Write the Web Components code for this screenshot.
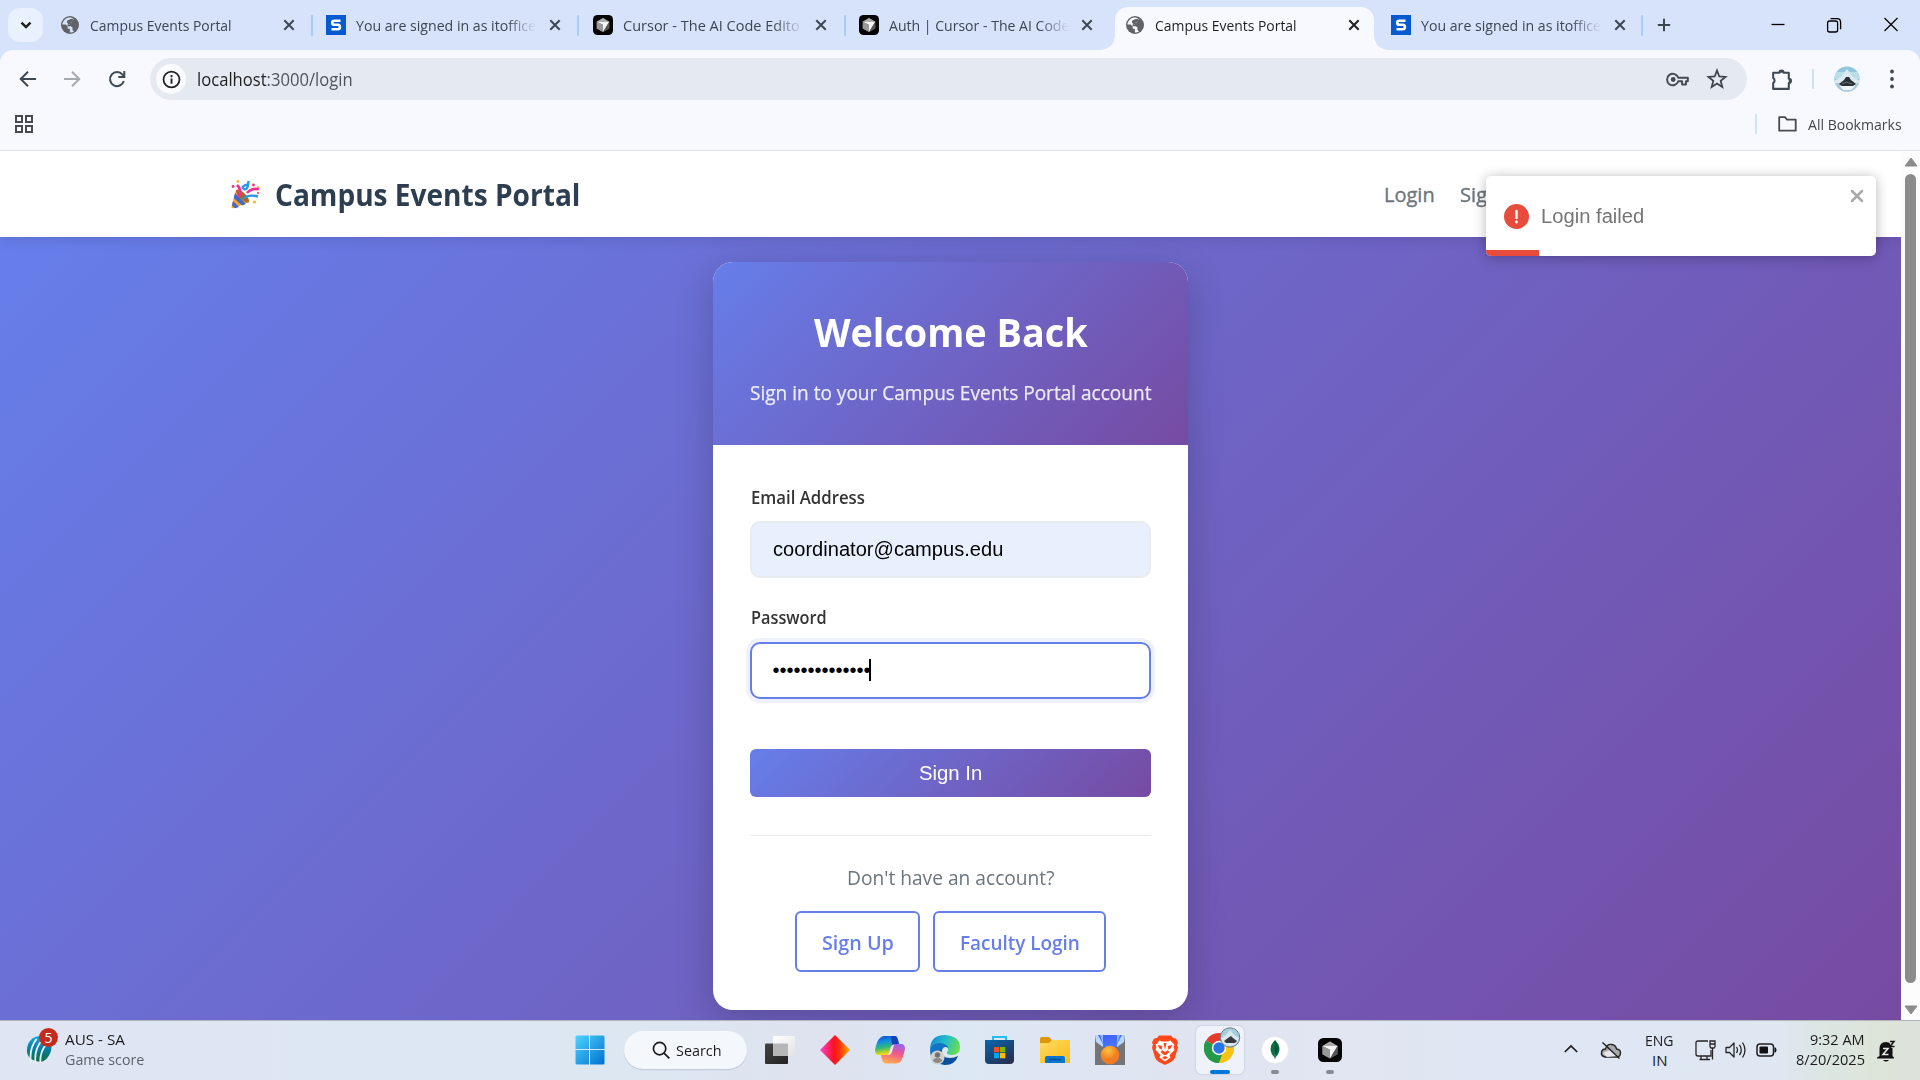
<!DOCTYPE html>
<html lang="en">
<head>
<meta charset="utf-8">
<title>Campus Events Portal</title>
<style>
html,body{margin:0;padding:0;height:100%;overflow:hidden}
body{font-family:"Open Sans","Noto Sans",sans-serif;color:#1f1f1f}
</style>
</head>
<body>
<desktop-screen></desktop-screen>
<script>
const ICONS = {
chevron:[20,20,'<path d="M5.5 7.6 10 12.1l4.5-4.5" fill="none" stroke="#1f1f1f" stroke-width="2.5"/>'],
globe:[20,20,'<circle cx="10" cy="10" r="9" fill="#5f6368"/><path d="M9 2.6c-3.5.6-6.300 3.500-6.600 6.900h3.300l2 2v2.200h2.200v3.700c1.500.1 3-.3 4.100-.9l-1.500-1.500v-2.400l-1.700-1.300H7.600V9.300h2.500V7.300h2V5.200L14 4.400C12.500 3 10.700 2.500 9 2.600z" fill="var(--tab,#d7e3fa)"/><path d="M10.600 4h2.900l-1.100 1.500v1.600h-2V9H8.200L7 7.500V5.800z" fill="#5f6368"/>'],
sicon:[20,20,'<path fill="#0759cf" d="M0 0h20v20H0z"/><path d="M14.500 5.700H8.300Q6.200 5.700 6.200 7.700T8.300 9.800h3.500q2.100 0 2.100 2.200t-2.100 2.200H5.500" fill="none" stroke="#fff" stroke-width="2.600"/>'],
cursor:[24,24,'<rect width="24" height="24" rx="5.500" fill="#050505"/><path d="M12 3.500 19.500 8v8.300L12 20.500l-7.500-4.200V8z" fill="#777"/><path d="M4.500 8 12 3.500 19.500 8z" fill="#aaa"/><path d="M4.500 8H19.500L12 20.500V11.800z" fill="#f5f5f5"/><path d="M4.500 8 12 11.800v8.700l-7.500-4.200z" fill="#999"/><path d="M19.500 8v8.300L12 20.500z" fill="#555"/>'],
close:[20,20,'<path d="m5.300 5.300 9.400 9.400m0-9.400-9.400 9.400" stroke="currentColor" stroke-width="2" fill="none"/>'],
plus:[20,20,'<path d="M10 3.800v12.400M3.800 10h12.400" stroke="#3c4655" stroke-width="2"/>'],
min:[20,20,'<path d="M3.500 9.500h13" stroke="#000" stroke-width="1.300"/>'],
restore:[20,20,'<rect x="3.600" y="6" width="10" height="11" rx="2" fill="none" stroke="#000" stroke-width="1.300"/><path d="M6.500 3.600h6.500q3.600 0 3.600 3.600v7" fill="none" stroke="#000" stroke-width="1.300"/>'],
wclose:[20,20,'<path d="m3.500 3 13 13m0-13-13 13" stroke="#000" stroke-width="1.200"/>'],
back:[24,24,'<path d="M20 12H5m7-7.300L4.700 12l7.300 7.300" fill="none" stroke="#3f4956" stroke-width="2"/>'],
fwd:[24,24,'<path d="M4 12h15m-7-7.300 7.300 7.300-7.300 7.300" fill="none" stroke="#a5a9b0" stroke-width="2"/>'],
reload:[24,24,'<path d="M18.800 14a7 7 0 1 1-1.300-6.300l1.700 1.700" fill="none" stroke="#3f4956" stroke-width="2"/><path d="M19.300 4v6h-6" fill="none" stroke="#3f4956" stroke-width="2"/>'],
info:[20,20,'<circle cx="10" cy="10" r="7.600" fill="none" stroke="#222" stroke-width="1.700"/><path d="M10 9v5M10 5.800v2" stroke="#222" stroke-width="1.800"/>'],
key:[24,24,'<path d="M12.800 10.200h10v3.700h-2v3.400h-4v-3.400h-4A6 6 0 1 1 12.800 10.200z" fill="none" stroke="#474b50" stroke-width="2" stroke-linejoin="round"/><circle cx="7.500" cy="12" r="2.500" fill="#474b50"/>'],
star:[22,22,'<path d="m11 2.500 2.300 6 6.200.4-4.800 4 1.600 6.100-5.300-3.400L5.700 19l1.600-6.100-4.800-4 6.200-.4z" fill="none" stroke="#3f444a" stroke-width="1.800"/>'],
puzzle:[24,24,'<path d="M4 5.500h6a2 2 0 1 1 4 0h5v5.700a2.100 2.100 0 1 1 0 4.200V21H4v-5.500a3 3 0 0 0 0-5z" fill="none" stroke="#3f4956" stroke-width="2" stroke-linejoin="round"/><path d="M10 5.500a2 2 0 1 1 4 0zM19 11.200a2.100 2.100 0 1 1 0 4.200z" fill="#3f4956"/>'],
avatar:[26,26,'<clipPath id="a"><circle cx="13" cy="13" r="12.600"/></clipPath><g clip-path="url(#a)"><path fill="#8fc7dd" d="M0 0h26v26H0z"/><path fill="#b9dde9" d="M0 6h26v7H0z"/><path fill="#dcebf1" d="m13 3 6 8 7 4v11H0V15l7-4z"/><path fill="#a9c9da" d="M0 17h6l4 6h8l5-6h3v9H0z"/><path fill="#eef5f8" d="m6 20 7-2 8 2-4 4H9z"/><path d="m5 18 5-4 2-3h3l2 3 5 4-3 2H8z" fill="#2b3035"/><path d="m8 18 4-2 6 2" stroke="#63717b" fill="none"/></g>'],
dots:[24,24,'<circle cx="12" cy="4.500" r="1.900" fill="#3f4956"/><circle cx="12" cy="12" r="1.900" fill="#3f4956"/><circle cx="12" cy="19.500" r="1.900" fill="#3f4956"/>'],
apps:[20,20,'<path d="M2 2h6v6H2zM12 2h6v6h-6zM2 12h6v6H2zM12 12h6v6h-6z" fill="none" stroke="#474b50" stroke-width="2"/>'],
folder:[22,20,'<path d="M2.300 3.200h6l2.300 2.600h9v11.700H2.300z" fill="none" stroke="#474b50" stroke-width="1.900" stroke-linejoin="round"/>'],
party:[30,30,'<path d="M6 11 19 23 4 29Q1 30 1.500 27z" fill="#f5a623"/><path d="m5 14 11 11-4 1.500L3.700 19zM3 22l6 6-4 1.300-3-3z" fill="#4169c9"/><ellipse cx="12.600" cy="17" rx="3.200" ry="8.700" transform="rotate(-45 12.600 17)" fill="#a96b21"/><path d="M7 6q5 4 1.800 12M17 14q4-5 12-4" fill="none" stroke="#f72d93" stroke-width="2.600"/><path d="M18.500 2q-.5 10-4.500 8t3-4.500M13 20q5-5 15-2.500" fill="none" stroke="#2997e8" stroke-width="2.400"/><g fill="#f72d93"><circle cx="3" cy="7.500" r="1.400"/><circle cx="23.500" cy="6" r="1.400"/><circle cx="28" cy="14" r="1.100"/></g><g fill="#f7b733"><circle cx="8" cy="2.500" r="1.400"/><circle cx="24.500" cy="23" r="1.600"/><path d="M27 7h2v2h-2z"/></g>'],
error:[25,25,'<circle cx="12.500" cy="12.500" r="12.500" fill="#e74c3c"/><path d="M12.500 7v7" stroke="#fff" stroke-width="2.400" stroke-linecap="round"/><circle cx="12.500" cy="18" r="1.400" fill="#fff"/>'],
tclose:[14,14,'<path d="m2 2 10 10M12 2 2 12" stroke="#a9a9a9" stroke-width="2.500" stroke-linecap="round"/>'],
up:[14,10,'<path d="M7 1 13 9H1z" fill="#8b8b8b" stroke="#8b8b8b" stroke-linejoin="round"/>'],
down:[14,10,'<path d="M7 9 1 1h12z" fill="#8b8b8b" stroke="#8b8b8b" stroke-linejoin="round"/>'],
cricket:[28,30,'<defs><linearGradient id="a" x2="0" y2="1"><stop stop-color="#18a7dd"/><stop offset=".5" stop-color="#087da0"/><stop offset="1" stop-color="#07713c"/></linearGradient></defs><path d="M1 17C1 8 7 2 15 2c9 0 13 7 11 15-2 7-6 11-11 12l-5-1-5-2Q1 22 1 17z" fill="url(#a)"/><path d="M5 30Q3 15 11 5M10 31Q8 17 16 7M15 31Q14 20 20 12" fill="none" stroke="#e8f0f7" stroke-width="1.900"/>'],
windows:[30,30,'<defs><linearGradient id="a" x2="1" y2="1"><stop stop-color="#4fd3ff"/><stop offset="1" stop-color="#0070cf"/></linearGradient></defs><path d="M2 .5h12V14H.5V2Q.5.500 2 .5zM15 .5h13q1.500 0 1.500 1.500v12H15zM.5 15H14v14.500H2Q.5 29.500.5 28zM15 15h14.500v13q0 1.500-1.500 1.500H15z" fill="url(#a)"/>'],
search:[20,20,'<circle cx="8" cy="8" r="6.500" fill="none" stroke="#1b1b1b" stroke-width="1.800"/><path d="m12.700 12.700 5.500 5.500" stroke="#1b1b1b" stroke-width="1.900"/>'],
taskview:[30,30,'<defs><linearGradient id="a" x2="1" y2="1"><stop stop-color="#444"/><stop offset="1" stop-color="#222"/></linearGradient><linearGradient id="b" y2="1"><stop stop-color="#fff"/><stop offset="1" stop-color="#e3e3e5"/></linearGradient></defs><rect y="8.500" width="23" height="20.500" rx="1" fill="url(#a)"/><rect x="8" y="1" width="22" height="20" rx="1" fill="url(#b)"/><path d="M8 8.500h15V21H8z" fill="#b7b7b7"/>'],
diamond:[30,30,'<defs><linearGradient id="a"><stop stop-color="#f944cf"/><stop offset=".45" stop-color="#ff1025"/><stop offset=".65" stop-color="#fa300c"/><stop offset="1" stop-color="#ffb400"/></linearGradient></defs><path d="m15 0 15 15-15 15L0 15z" fill="url(#a)"/>'],
copilot:[30,30,'<defs><linearGradient id="a" x2=".2" y2="1"><stop stop-color="#1646c7"/><stop offset=".35" stop-color="#118edf"/><stop offset=".65" stop-color="#34b879"/><stop offset="1" stop-color="#f4dd05"/></linearGradient><linearGradient id="b" x1=".7" y1="0" x2=".4" y2="1"><stop stop-color="#9763f0"/><stop offset=".45" stop-color="#ee578c"/><stop offset="1" stop-color="#ffad50"/></linearGradient></defs><path d="M9 1h11q2 0 3 4l1 4h-4q-3 0-4 4l-1.500 4q-1 3-4.500 3H4q-4 0-4-5Q2 5 5 3 7 1 9 1z" fill="url(#a)"/><path d="M16 1h4q2 0 3 4l1 4h-4l-3 1z" fill="#1740b9"/><path d="M20 9h6q4 0 4 5-2 9-4 12-1.500 2.500-5 2.500H11q-3 0-4-4l-1-4.500h4q3.500 0 4.500-3l1.500-5q1-3 4-3z" fill="url(#b)"/><path d="M18 10q-2 0-3 5l-1.500 4q-1 1-2 1h2.500q2 0 3-3l2-7z" fill="#e7e8f4"/>'],
edge:[30,30,'<defs><linearGradient id="a" x1="0" y1=".3" x2="1" y2=".6"><stop stop-color="#1589d6"/><stop offset=".45" stop-color="#22bccb"/><stop offset="1" stop-color="#6be04a"/></linearGradient></defs><path d="M0 15Q0 0 15 0q15 1 15 12 0 8-8 8-6 0-5-3 2-1.500 1-3.500-2-4-8-4T0 15z" fill="url(#a)"/><path d="M0 15Q2 8 10 8q8 1 8.500 6-.5-2-3-2-3 0-4 5 0 6 6 9l-2 4Q0 29 0 15z" fill="#1273c4"/><path d="M11.500 14q-.5 9 8.500 9 4 0 8-2-3 9-13 9-8-2-8-9 1-5 4.500-7z" fill="#0b4f9e"/><circle cx="7.500" cy="22.500" r="7" fill="#cfcfcf"/><circle cx="7.500" cy="20" r="2.700" fill="#74716e"/><path d="M3 26q0-3 4.500-3t4.500 3q-2 2-4.500 2T3 26z" fill="#8c8884"/>'],
store:[30,30,'<defs><linearGradient id="a" x2=".7" y2="1"><stop stop-color="#0767ae"/><stop offset="1" stop-color="#263052"/></linearGradient></defs><path d="M8 6V2h13v4" fill="none" stroke="#25bdf5" stroke-width="2"/><path d="M0 5h29v20q0 4-4 4H4q-4 0-4-4z" fill="url(#a)"/><path d="M9 12h5.300v5.300H9z" fill="#f25022"/><path d="M15 12h5.300v5.300H15z" fill="#7fba00"/><path d="M9 18h5.300v5.300H9z" fill="#00a4ef"/><path d="M15 18h5.300v5.300H15z" fill="#ffb900"/>'],
explorer:[30,30,'<defs><linearGradient id="a" x2="1" y2="1"><stop stop-color="#ffda65"/><stop offset="1" stop-color="#f9bc16"/></linearGradient></defs><path d="M0 4q0-2 2-2h7l3 3v5H0z" fill="#dc9704"/><path d="M0 8h9l3-3h17q1 0 1 1v22H0z" fill="url(#a)"/><path d="M5 28v-5q0-2 2-2h16q2 0 2 2v5z" fill="#0876ce"/><path d="M9 24.500h12" stroke="#075296" stroke-width="1.500"/>'],
medal:[30,30,'<defs><linearGradient id="a" y2="1"><stop stop-color="#3d5cff"/><stop offset="1" stop-color="#4c7ff6"/></linearGradient><radialGradient id="b" cx=".4" cy=".25"><stop stop-color="#ffc33c"/><stop offset="1" stop-color="#f37c22"/></radialGradient></defs><path d="M0 0h30v30H0z" fill="#757575"/><path d="m1 0 7 12h14l7-12z" fill="url(#a)"/><path d="M0 0h3l5 9v3L1 7zM30 0h-3l-5 9v3l7-5z" fill="#b8d6ff"/><path d="m5 0 3 9V0zM25 0l-3 9V0z" fill="#8bb5ff"/><circle cx="15" cy="20" r="9.300" fill="url(#b)"/>'],
brave:[30,30,'<path d="M9 .5h12l2 2.500 3 .5 2 4-1 2 1 3-3 10q-1 3-4 4.500L15 30l-6-3q-3-1.500-4-4.500L2 12.500l1-3-1-2 2-4L7 3z" fill="#ff4719"/><path d="m5.500 10 4-4.500L12 6.500h6l2.500-1 4 4.500-1 2 1 3-5 5 1 2.500-5.500 4-5.500-4 1-2.500-5-5 1-3z" fill="#fff"/><path d="m7.500 10 5 1-1 4 3.500 2 3.500-2-1-4 5-1-2 3.500-3 1.500 2 2-3.500 3h-2l-3.500-3 2-2-3-1.500z" fill="#ff4719"/><path d="m12 22.500 3-1.500 3 1.500-3 2zM13.500 8h3L15 15z" fill="#ff4719"/>'],
chrome:[40,40,'<g transform="translate(0 6)"><path d="M15 15 2 7.500A15 15 0 0 1 28 7.500z" fill="#e33b2e"/><path d="M15 15 28 7.500A15 15 0 0 1 15 30z" fill="#fbc115"/><path d="M15 15v15A15 15 0 0 1 2 7.500z" fill="#249a49"/><path d="M15 8h13.300a15 15 0 0 1-13.300 22l6.100-11.500z" fill="#fbc115"/><path d="M2 7.500 9 18.500l9 3L15 30A15 15 0 0 1 2 7.500z" fill="#249a49"/><circle cx="15" cy="15" r="7.200" fill="#fff"/><circle cx="15" cy="15" r="5.700" fill="#2874e8"/></g><circle cx="26" cy="10.500" r="9.700" fill="#a5cfdf" stroke="#727b85"/><path d="m26 3 4 5 5 3q-2 8-9 8-7 0-9-8l5-3z" fill="#dbe8ee"/><path d="m20 14 4-3 3-2 2 2 4 3-2 2h-9z" fill="#343a40"/>'],
mongo:[28,28,'<circle cx="14" cy="14" r="13.500" fill="#fff" stroke="#e2e4e8" stroke-width=".7"/><path d="M14 4q9 9 0 18Q5 13 14 4z" fill="#0b7042"/><path d="M14 4q5 9 0 18z" fill="#00533d"/><path d="M14 18v5" stroke="#668c79"/>'],
tup:[16,16,'<path d="m1.800 11 6.200-6 6.200 6" fill="none" stroke="#1b1b1b" stroke-width="1.700"/>'],
cloud:[22,20,'<path d="M5 17Q1 16 1.500 12.500 2 9 5.500 9 7 3.500 12 4.500q4 1 4.500 4.500 4 .5 4 4T17 17z" fill="#aaa" stroke="#262626" stroke-width="1.400"/><path d="m3 13 7-3 8 6-11 1z" fill="#e8e8e8"/><path d="m2.500 2.500 17 16" stroke="#222" stroke-width="1.500"/>'],
monitor:[22,22,'<path d="M13 2H3Q1 2 1 4v11q0 2 2 2h13V11M6 17v3m6-3v3M4.500 20.500H15" fill="none" stroke="#252525" stroke-width="1.300"/><path d="M15 2h5v5.500l-1 1.500h-3l-1-1.500zM15 5h5M17.500 9v11.500" fill="none" stroke="#252525" stroke-width="1.300"/>'],
speaker:[22,20,'<path d="M1 7.500h3.500L9 3v14l-4.500-4.500H1z" fill="none" stroke="#252525" stroke-width="1.300" stroke-linejoin="round"/><path d="M11.500 7q2 3 0 6M14.500 4.800q3.500 5.200 0 10.400M17.500 2.500q5 7.500 0 15" fill="none" stroke="#252525" stroke-width="1.300"/>'],
battery:[22,16,'<rect x="1" y="2" width="16.500" height="12" rx="3" fill="none" stroke="#202020" stroke-width="1.500"/><rect x="3.500" y="4.500" width="8.500" height="7" rx="1" fill="#111"/><path d="M18.500 5.500h1q2 2.500 0 5h-1z" fill="#111"/>'],
bell:[20,22,'<path d="M3.500 16V9q0-7 6.500-7 6 0 6.500 6v8l1.500 1.500v1H1v-1z" fill="#111"/><path d="M7 20h6q-3 3-6 0z" fill="#111"/><path d="M7 8.500h5l-5 6h5.500" fill="none" stroke="#e1e7e1" stroke-width="1.600"/><path d="M12.500 0H20v8h-4.500z" fill="#dde3dc"/><path d="M14 1.500h4L14 6.500h4.500" fill="none" stroke="#111" stroke-width="1.500"/>']
};
class Base extends HTMLElement{
  constructor(){super();this.attachShadow({mode:'open'});}
  draw(html){this.shadowRoot.innerHTML='<style>*{box-sizing:border-box}</style>'+html;}
}
customElements.define('ui-icon',class extends Base{
  connectedCallback(){
    const [w,h,body]=ICONS[this.getAttribute('name')];
    const W=this.getAttribute('w')||w,H=Math.round(W*h/w*100)/100;
    this.draw(`<style>:host{display:block;flex:none;width:${W}px;height:${H}px}svg{display:block}</style><svg width="${W}" height="${H}" viewBox="0 0 ${w} ${h}">${body}</svg>`);
  }
});
/* One line of text, condensed or widened to a given advance width. */
customElements.define('fit-text',class extends Base{
  connectedCallback(){
    const w=+this.getAttribute('w');
    this.draw(`<style>:host{display:block;flex:none;width:${w}px;white-space:pre}span{display:inline-block;transform-origin:0 50%}</style><span><slot></slot></span>`);
    const s=this.shadowRoot.querySelector('span');
    s.style.transform=`scaleX(${w/s.offsetWidth})`;
  }
});
customElements.define('browser-tab',class extends Base{
  connectedCallback(){
    const on=this.hasAttribute('active'),next=this.hasAttribute('nosep');
    this.draw(`<style>
    :host{display:flex;flex:none;width:266.25px;height:50px;padding:7px 0 0}
    .t{--tab:${on?'#f8f9fe':'#d7e3fa'};position:relative;display:flex;align-items:center;width:259px;height:43px;padding:0 10px 7px;border-radius:13px 13px 0 0;color:${on?'#1f1f1f':'#3c4655'};background:${on?'#f8f9fe':'none'}}
    .t.on::before,.t.on::after{content:"";position:absolute;bottom:0;width:14px;height:14px}
    .t.on::before{left:-14px;background:radial-gradient(circle at 0 0,transparent 13.500px,#f8f9fe 14px)}
    .t.on::after{right:-14px;background:radial-gradient(circle at 100% 0,transparent 13.500px,#f8f9fe 14px)}
    .l{width:180px;margin:0 9px 0 10px;overflow:hidden;font-size:15px;line-height:24px;${this.hasAttribute('fade')?'-webkit-mask-image:linear-gradient(90deg,#000 150px,transparent 180px)':''}}
    i{width:2px;height:21px;margin:8px 0 0 2px;border-radius:1px;background:${on||next?'none':'#a8cbfb'}}
    </style><div class="t ${on?'on':''}"><ui-icon name="${this.getAttribute('icon')}" w="20"></ui-icon><div class="l"><fit-text w="${this.getAttribute('w')}"><slot></slot></fit-text></div><ui-icon name="close" w="20" style="margin-left:-.5px"></ui-icon></div><i></i>`);
  }
});
customElements.define('browser-chrome',class extends Base{
  connectedCallback(){this.draw(`<style>
  :host{display:block;height:151px;background:#d7e3fa;color:#1f1f1f}
  .strip{display:flex;height:50px}
  .menu{display:flex;align-items:center;justify-content:center;width:35px;height:34px;margin:8px 7px 0 8px;border-radius:12px;background:#e9f1fe}
  .sep{width:2px;height:21px;margin:15px 11px 0 -6.500px;background:#a8cbfb;border-radius:1px}
  .plus{margin-top:15px}.win{display:flex;gap:37px;margin:15px 19px 0 auto}
  .bars{height:101px;background:#f8f9fe;border-radius:13px 13px 0 0;border-bottom:1px solid #dfe2ec}
  .nav{display:flex;align-items:center;height:58px;padding:0 15px 0 16px}
  .omni{display:flex;align-items:center;width:1597px;height:42px;margin-left:21px;border-radius:21px;background:#e5e9f2;padding:0 19px 0 6px}
  .i{display:flex;align-items:center;justify-content:center;width:30px;height:30px;border-radius:50%;background:#fafbff;margin-right:11px}
  .u{font-size:18px;line-height:26px}.u b{font-weight:400;color:#50555c}
  .v{width:2px;height:20px;background:#cfe2fb}
  .book{display:flex;align-items:center;height:34px;margin-top:0;padding:0 18px 0 14px;font-size:14.800px;line-height:24px;color:#42474d}
  .book>*{margin-top:-2px}
  </style>
  <div class="strip"><div class="menu"><ui-icon name="chevron" w="20"></ui-icon></div>
  <browser-tab icon="globe" w="142">Campus Events Portal</browser-tab>
  <browser-tab icon="sicon" w="180" fade>You are signed in as itoffice</browser-tab>
  <browser-tab icon="cursor" w="177" fade>Cursor - The AI Code Edito</browser-tab>
  <browser-tab icon="cursor" w="180" fade nosep>Auth | Cursor - The AI Code</browser-tab>
  <browser-tab icon="globe" w="142" active>Campus Events Portal</browser-tab>
  <browser-tab icon="sicon" w="180" fade nosep>You are signed in as itoffice</browser-tab>
  <div class="sep"></div><ui-icon class="plus" name="plus"></ui-icon>
  <div class="win"><ui-icon name="min"></ui-icon><ui-icon name="restore" style="margin-left:-1px"></ui-icon><ui-icon name="wclose"></ui-icon></div></div>
  <div class="bars"><div class="nav"><ui-icon name="back"></ui-icon><ui-icon name="fwd" style="margin:0 21px 0 20px"></ui-icon><ui-icon name="reload"></ui-icon>
  <div class="omni"><div class="i"><ui-icon name="info" w="21"></ui-icon></div><fit-text class="u" w="156">localhost<b>:3000/login</b></fit-text><ui-icon name="key" w="23" style="margin-left:auto"></ui-icon><ui-icon name="star" w="22" style="margin-left:17px"></ui-icon></div>
  <ui-icon name="puzzle" w="25" style="margin-left:22px"></ui-icon><div class="v" style="margin:0 20px 0 18px"></div><ui-icon name="avatar" w="26"></ui-icon><ui-icon name="dots" w="24" style="margin-left:20px"></ui-icon></div>
  <div class="book"><ui-icon name="apps"></ui-icon><div class="v" style="margin-left:auto;margin-right:20px"></div><ui-icon name="folder" w="21"></ui-icon><fit-text w="94" style="margin-left:10px">All Bookmarks</fit-text></div></div>`)}
});
customElements.define('site-header',class extends Base{
  connectedCallback(){this.draw(`<style>
  :host{display:flex;position:relative;align-items:center;height:86px;background:#fff;padding:0 0 0 230px;box-shadow:0 2px 12px rgba(0,0,0,.12)}
  .b{font-size:30px;font-weight:700;color:#2c3e50;line-height:44px;margin:2px 0 0 15px}
  nav{display:flex;gap:25px;margin:2px 0 0 804px;font-size:20px;line-height:30px;font-weight:500;color:#6c757d;-webkit-text-stroke:.35px #6c757d}
  </style><ui-icon name="party" w="30"></ui-icon><fit-text class="b" w="305">Campus Events Portal</fit-text><nav><fit-text w="51">Login</fit-text><fit-text w="72">Sign Up</fit-text></nav>`)}
});
customElements.define('toast-message',class extends Base{
  connectedCallback(){this.draw(`<style>
  :host{display:block;width:390px;height:80px;background:#fff;border-radius:5px;overflow:hidden;box-shadow:0 1px 12px rgba(0,0,0,.22),0 3px 18px rgba(0,0,0,.08);font:20px/24px "Liberation Sans",Arial,sans-serif;color:#757575}
  .r{display:flex;height:74px;padding:28px 12px 0 18px;gap:12px}
  .p{width:53px;height:6px;background:#e74c3c}
  </style><div class="r"><ui-icon name="error"></ui-icon><fit-text w="103"><slot></slot></fit-text><ui-icon name="tclose" style="margin:-15px 0 0 auto"></ui-icon></div><div class="p"></div>`)}
});
customElements.define('form-field',class extends Base{
  connectedCallback(){const f=this.hasAttribute('focused');this.draw(`<style>
  :host{display:block}
  .l{font-size:17.800px;font-weight:600;color:#333;line-height:28px;margin:0 0 ${f?11:10}px .5px}
  .i{display:flex;align-items:center;height:57px;border:2px solid ${f?'#667eea':'#e9ecef'};border-radius:10px;background:${f?'#fff':'#e8f0fe'};padding:0 20px 2px 20.500px;font:20px/24px "Liberation Sans",Arial,sans-serif;color:#000;${f?'box-shadow:0 0 0 4px rgba(102,126,234,.1)':''}}
  i{width:2px;height:22px;background:#000;margin-left:-1.500px}
  </style><fit-text class="l" w="${this.getAttribute('lw')}">${this.getAttribute('label')}</fit-text><div class="i"><fit-text w="${this.getAttribute('w')}"><slot></slot></fit-text>${f?'<i></i>':''}</div>`)}
});
customElements.define('login-card',class extends Base{
  connectedCallback(){this.draw(`<style>
  :host{display:block;width:475px;height:748px;border-radius:20px;background:#fff;overflow:hidden;box-shadow:0 10px 38px rgba(0,0,0,.2)}
  header{display:flex;flex-direction:column;align-items:center;height:183px;padding-top:37.500px;background:linear-gradient(135deg,#667eea,#764ba2);color:#fff}
  .h{font-size:40px;font-weight:700;line-height:64px}
  .s{font-size:20px;line-height:30px;margin-top:14.500px;opacity:.87;-webkit-text-stroke:.25px #fff}
  main{padding:38px 37px 0 37px}
  form-field+form-field{margin-top:25px}
  .go{display:flex;align-items:center;justify-content:center;height:48px;margin-top:50px;border-radius:6px;background:linear-gradient(135deg,#667eea,#764ba2);color:#fff;font:20px/24px "Liberation Sans",Arial,sans-serif}
  hr{height:1px;border:0;background:#e9ecef;margin:38px 0 27px}
  .q{font-size:20px;line-height:30px;color:#6c757d;margin:0 auto}
  .a{display:flex;justify-content:center;gap:13px;margin-top:18px}
  .a div{display:flex;align-items:center;justify-content:center;height:61px;border:2px solid #667eea;border-radius:6px;padding-top:2px;color:#667eea;font-size:20px;line-height:30px;font-weight:600}
  </style><header><fit-text class="h" w="274">Welcome Back</fit-text><fit-text class="s" w="401">Sign in to your Campus Events Portal account</fit-text></header>
  <main><form-field label="Email Address" lw="114" w="230">coordinator@campus.edu</form-field>
  <form-field label="Password" lw="76" w="98" focused>••••••••••••••</form-field>
  <div class="go"><fit-text w="63">Sign In</fit-text></div><hr><fit-text class="q" w="207">Don't have an account?</fit-text>
  <div class="a"><div style="width:125px"><fit-text w="72">Sign Up</fit-text></div><div style="width:173px"><fit-text w="120">Faculty Login</fit-text></div></div></main>`)}
});
customElements.define('scroll-bar',class extends Base{
  connectedCallback(){this.draw(`<style>:host{display:flex;flex-direction:column;align-items:center;width:19px;background:#fcfcfc;padding:6px 0 5px}div{flex:1;width:11px;border-radius:6px;background:#8b8b8b;margin:7px 0 22px}</style><ui-icon name="up"></ui-icon><div></div><ui-icon name="down"></ui-icon>`)}
});
customElements.define('task-app',class extends Base{
  connectedCallback(){const r=this.getAttribute('run');this.draw(`<style>
  :host{display:flex;flex:none;justify-content:center;width:55px;height:59px;padding-top:5px}
  .c{position:relative;display:flex;align-items:center;justify-content:center;width:48px;height:48px;border-radius:6px;${r==='on'?'background:#f0f2f9;box-shadow:0 0 1px 1px rgba(170,180,200,.3)':''}}
  i{position:absolute;bottom:0;height:4px;border-radius:2px;width:${r==='on'?20:8}px;background:${r==='on'?'#0078d7':'#858990'}}
  </style><div class="c"><slot></slot>${r?'<i></i>':''}</div>`)}
});
customElements.define('task-bar',class extends Base{
  connectedCallback(){
    const apps=['taskview','diamond','copilot','edge','store','explorer','medal','brave'].map(n=>`<task-app><ui-icon name="${n}" w="30"></ui-icon></task-app>`).join('');
    this.draw(`<style>
  :host{display:flex;height:60px;border-top:1px solid #b1b4bc;background:linear-gradient(90deg,#e0e5f3 0,#dde7f3 18%,#dce7f2 34%,#dfe2ef 43%,#dce8f3 50%,#e0e4f1 61%,#e2e5f2 70%,#dfe7f4 85%,#dfe7f2 92.500%,#dce6e2 95%,#dde4d9 98%,#dde2dc);font-size:15px;line-height:20px;color:#1b1b1b}
  .w{display:flex;width:562px;padding:8px 0 0 26px}
  .ci{position:relative;width:28px;height:34px;padding-top:5px;margin-right:10.500px}
  .ba{position:absolute;left:13px;top:-1px;width:19px;height:19px;border-radius:50%;background:#c42b1c;color:#fff;font-size:14px;line-height:19px;text-align:center}
  .sp{display:flex;align-items:center;width:123px;height:38px;margin:10px 5px 0 7px;border-radius:19px;background:#f4f7fb;box-shadow:0 1px 1px rgba(120,130,150,.3);padding-left:28px}
  .tray{display:flex;margin-left:auto;padding-right:24px}
  .m{margin-top:19px}
  .two{display:flex;flex-direction:column;padding-top:9px}
  </style>
  <div class="w"><div class="ci"><ui-icon name="cricket" w="27"></ui-icon><div class="ba">5</div></div><div><fit-text w="60">AUS - SA</fit-text><fit-text w="79" style="color:#5e636b">Game score</fit-text></div></div>
  <task-app><ui-icon name="windows" w="30"></ui-icon></task-app>
  <div class="sp"><ui-icon name="search" w="19"></ui-icon><fit-text w="46" style="margin-left:5px">Search</fit-text></div>${apps}
  <task-app run="on"><ui-icon name="chrome" w="40" style="margin:-6px 0 0 9px"></ui-icon></task-app><task-app run="y"><ui-icon name="mongo" w="28"></ui-icon></task-app><task-app run="y"><ui-icon name="cursor" w="24"></ui-icon></task-app>
  <div class="tray"><ui-icon class="m" name="tup" style="margin-top:20px"></ui-icon><ui-icon class="m" name="cloud" style="margin-left:21px"></ui-icon>
  <div class="two" style="margin-left:23px;align-items:center"><fit-text w="29">ENG</fit-text><fit-text w="15">IN</fit-text></div>
  <ui-icon class="m" name="monitor" style="margin:18px 0 0 21px"></ui-icon><ui-icon class="m" name="speaker" style="margin-left:8px"></ui-icon><ui-icon class="m" name="battery" style="margin:21px 0 0 9px"></ui-icon>
  <div class="two" style="margin-left:18px;padding-top:8px;align-items:flex-end"><fit-text w="55">9:32 AM</fit-text><fit-text w="69">8/20/2025</fit-text></div><ui-icon class="m" name="bell" style="margin:19px 0 0 11px"></ui-icon></div>`)}
});
customElements.define('desktop-screen',class extends Base{
  connectedCallback(){this.draw(`<style>
  :host{display:flex;flex-direction:column;width:1920px;height:1080px;overflow:hidden}
  .view{display:flex;height:869px}
  .page{position:relative;display:flex;flex-direction:column;width:1901px;overflow:hidden}
  .bg{display:flex;justify-content:center;flex:1;padding-top:25px;background:linear-gradient(135deg,#667eea,#764ba2)}
  toast-message{position:absolute;left:1486px;top:25px;z-index:3}
  site-header{z-index:2}
  </style><browser-chrome></browser-chrome><div class="view"><div class="page"><site-header></site-header><div class="bg"><login-card></login-card></div><toast-message>Login failed</toast-message></div><scroll-bar></scroll-bar></div><task-bar></task-bar>`)}
});
</script>
</body>
</html>
